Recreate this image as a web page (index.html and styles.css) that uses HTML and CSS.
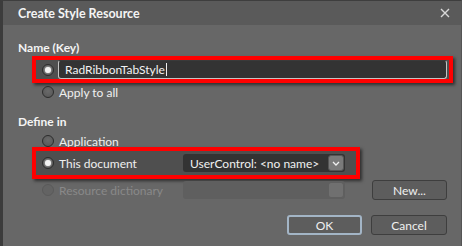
FILE: index.html
```html
<!DOCTYPE html>
<html>
<head>
<meta charset="utf-8">
<link rel="stylesheet" href="styles.css">
</head>
<body>
<div class="window">
  <div class="titlebar">
    <span class="title">Create Style Resource</span>
    <svg class="close" width="10" height="10" viewBox="0 0 10 10"><path d="M1 1L9 9M9 1L1 9" stroke="#d8d8d8" stroke-width="1.4" fill="none"/></svg>
  </div>
  <div class="content">
    <div class="label label-name">Name (Key)</div>
    <div class="hl hl-name">
      <span class="radio checked"></span>
      <div class="input"><span class="input-text">RadRibbonTabStyle</span><span class="caret"></span></div>
    </div>
    <div class="option opt-apply"><span class="radio"></span><span>Apply to all</span></div>

    <div class="label label-define">Define in</div>
    <div class="option opt-app"><span class="radio"></span><span>Application</span></div>
    <div class="hl hl-doc">
      <div class="opt-label"><span class="radio checked"></span><span>This document</span></div>
      <div class="combo">
        <span class="combo-text">UserControl: &lt;no name&gt;</span>
        <span class="combo-btn"><svg width="8" height="5" viewBox="0 0 8 5"><path d="M1 1L4 4L7 1" stroke="#f0f0f0" stroke-width="1.3" fill="none"/></svg></span>
      </div>
    </div>
    <div class="option opt-res disabled">
      <div class="opt-label"><span class="radio"></span><span>Resource dictionary</span></div>
      <div class="combo combo-disabled"><span class="combo-btn"></span></div>
      <button class="btn btn-new">New...</button>
    </div>
    <div class="buttons">
      <button class="btn btn-ok">OK</button>
      <button class="btn btn-cancel">Cancel</button>
    </div>
  </div>
</div>
</body>
</html>
```

FILE: styles.css
```css
* { box-sizing: border-box; }
html, body {
  margin: 0;
  padding: 0;
  background: #676767;
}
body {
  width: 462px;
  height: 246px;
  overflow: hidden;
  font-family: Lato, "Open Sans", sans-serif;
  font-size: 12px;
  color: #f0f0f0;
}
.window {
  width: 462px;
  height: 246px;
  border-top: 1px solid #3e3e3e;
  border-left: 3px solid #3c3c3c;
  border-right: 1px solid #555;
  background: #676767;
  display: flex;
  flex-direction: column;
}
.titlebar {
  height: 24px;
  background: #5a5a5a;
  display: flex;
  align-items: center;
  justify-content: space-between;
  padding-left: 15px;
  padding-right: 11px;
}
.title {
  font-weight: bold;
  font-size: 12.5px;
  color: #f4f4f4;
}
.close { display: block; margin-top: -1px; }
.content {
  padding-left: 15px;
  display: flex;
  flex-direction: column;
}
.label {
  font-weight: bold;
  height: 16px;
  line-height: 16px;
  color: #f4f4f4;
}
.label-name { margin-top: 15px; }
.label-define { margin-top: 13px; }
.radio {
  width: 12px;
  height: 12px;
  border-radius: 50%;
  border: 1px solid #2c2c2c;
  background: radial-gradient(circle at 50% 40%, #6a6a6a, #555);
  flex: none;
  position: relative;
}
.radio.checked::after {
  content: "";
  position: absolute;
  left: 2px;
  top: 2px;
  width: 6px;
  height: 6px;
  border-radius: 50%;
  background: #f2f2f2;
  box-shadow: 0 0 2px #ddd;
}
.hl {
  border: 4px solid #ff0000;
  margin-left: 14px;
  background: #4f4f4f;
  box-shadow: 2px 2px 3px rgba(0,0,0,0.55);
  display: flex;
  align-items: center;
  padding-left: 6px;
}
.hl-name {
  width: 421px;
  height: 27px;
  padding-right: 2px;
  gap: 4px;
}
.input {
  flex: 1;
  height: 19px;
  background: #333;
  border: 1px solid #c4c4c4;
  border-top-color: #3a3a3a;
  border-radius: 3px;
  display: flex;
  align-items: center;
  padding-left: 6px;
}
.input-text { color: #f2f2f2; }
.caret {
  width: 1px;
  height: 13px;
  background: #eee;
  margin-left: 1px;
}
.option {
  display: flex;
  align-items: center;
  gap: 5px;
  margin-left: 24px;
  height: 18px;
}
.opt-app {
  margin-top: 5px;
  height: 12px;
}
.opt-label {
  display: flex;
  align-items: center;
  gap: 5px;
  width: 141px;
  flex: none;
}
.hl-doc {
  width: 328px;
  height: 32px;
}
.combo {
  width: 162px;
  height: 18px;
  background: #333;
  border-radius: 3px;
  display: flex;
  align-items: center;
  justify-content: space-between;
  padding-left: 7px;
  padding-right: 1px;
}
.combo-text { color: #f0f0f0; white-space: nowrap; }
.combo-btn {
  width: 16px;
  height: 16px;
  background: #7a7a7a;
  border: 1px solid #555;
  border-radius: 3px;
  display: flex;
  align-items: center;
  justify-content: center;
}
.opt-res {
  margin-top: 2px;
  height: 18px;
  width: 405px;
  gap: 0;
}
.disabled { color: #898989; }
.disabled .radio {
  border-color: #5a5a5a;
  background: #636363;
}
.combo-disabled {
  background: #5f5f5f;
  justify-content: flex-end;
}
.combo-disabled .combo-btn {
  background: #707070;
  border-color: #5f5f5f;
}
.btn {
  font-family: Lato, "Open Sans", sans-serif;
  font-size: 12px;
  color: #f0f0f0;
  background: #5d5d5d;
  border: 1px solid #3e3e3e;
  border-radius: 3px;
  height: 20px;
  padding: 0;
  margin: 0;
}
.btn-new {
  width: 75px;
  margin-left: auto;
}
.buttons {
  display: flex;
  justify-content: flex-end;
  gap: 9px;
  margin-top: 16px;
  width: 429px;
}
.btn-ok {
  width: 75px;
  border: 2px solid #a3b5c6;
}
.btn-cancel { width: 76px; }
```
